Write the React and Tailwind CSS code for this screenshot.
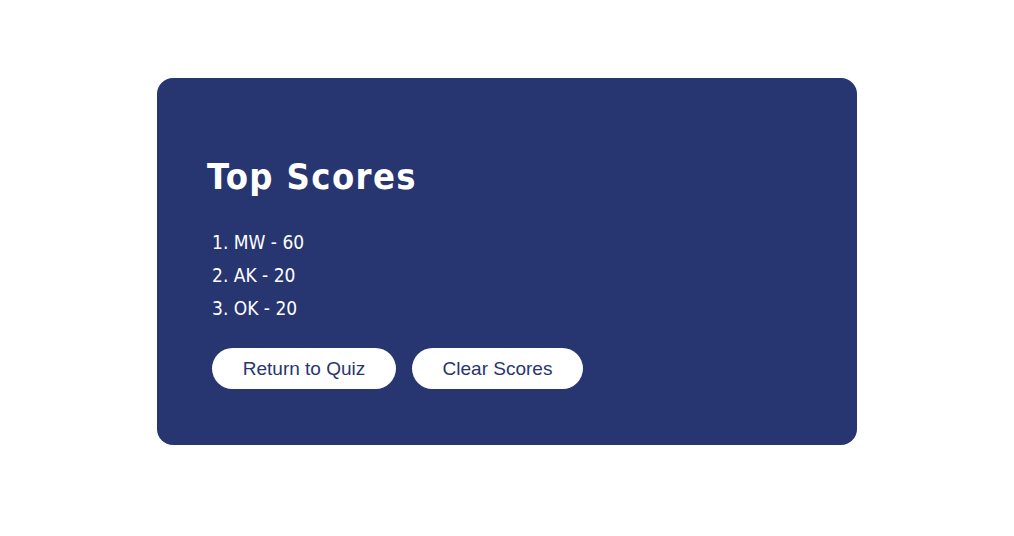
const scores = [
  { initials: 'MW', score: 60 },
  { initials: 'AK', score: 20 },
  { initials: 'OK', score: 20 },
];

const App = () => {
  return (
    <div className="min-h-screen bg-white pt-[78px]">
      <div className="mx-auto w-[700px] rounded-[16px] bg-[#273570] pl-[50px] pt-[77px] pb-[56px] text-white">
        <h1 className="font-['DejaVu_Sans_Condensed','DejaVu_Sans',sans-serif] text-[36px] font-bold leading-[44px] tracking-[1.4px]">
          Top Scores
        </h1>

        <ol className="mt-[27px] pl-[5px] font-['DejaVu_Sans_Condensed','DejaVu_Sans',sans-serif] text-[19px] leading-[33px]">
          {scores.map((s, i) => (
            <li key={s.initials}>
              {i + 1}. {s.initials} - {s.score}
            </li>
          ))}
        </ol>

        <div className="mt-[23px] flex gap-4 pl-[5px]">
          <button className="h-[41px] w-[184px] rounded-full bg-white pt-px font-['Liberation_Sans',Arial,sans-serif] text-[19px] text-[#273570]">
            Return to Quiz
          </button>
          <button className="h-[41px] w-[171px] rounded-full bg-white pt-px font-['Liberation_Sans',Arial,sans-serif] text-[19px] text-[#273570]">
            Clear Scores
          </button>
        </div>
      </div>
    </div>
  );
};

export default App;
